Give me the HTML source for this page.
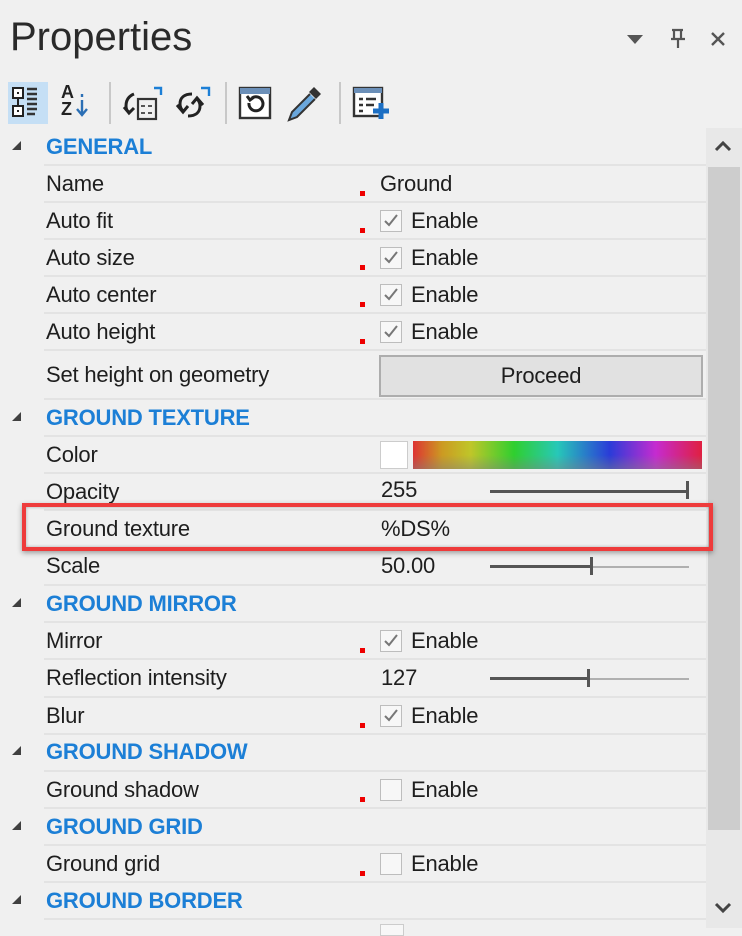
<!DOCTYPE html>
<html><head><meta charset="utf-8"><style>
body{margin:0;width:742px;height:928px;background:#f0f0f0;overflow:hidden;position:relative;font-family:"Liberation Sans",sans-serif;color:#1e1e1e}
.a{position:absolute}
.t{font-size:22px;letter-spacing:-0.2px;white-space:nowrap;line-height:24px}
.h{font-size:22px;font-weight:bold;color:#1c7fd6;letter-spacing:-0.2px;line-height:24px;white-space:nowrap}
.sep{position:absolute;left:44px;width:662px;height:2px;background:#e3e3e3}
.tri{position:absolute;left:12px;width:0;height:0;border-left:9px solid transparent;border-bottom:9px solid #404040}
.dot{position:absolute;left:360px;width:5px;height:5px;background:#e00}
.cb{position:absolute;left:380px;width:20px;height:20px;border:1px solid #bdbdbd;background:#f7f7f7}
.cb svg{position:absolute;left:2px;top:2px}
.trk{position:absolute;left:490px;width:199px;height:2px;background:#b0b0b0}
.fill{position:absolute;left:490px;height:3px;background:#555}
.thumb{position:absolute;width:3px;height:18px;background:#555}
</style></head><body>
<div class="a" style="left:10px;top:15px;font-size:40px;letter-spacing:0px;color:#2a2a2a">Properties</div>
<div class="a" style="left:627px;top:35px;width:0;height:0;border-left:8px solid transparent;border-right:8px solid transparent;border-top:9px solid #555"></div>
<svg class="a" style="left:668px;top:28px" width="20" height="22"><path d="M4 2h11M6 2v9M13 2v9M3 11h14M10 11v9" stroke="#555" stroke-width="2.2" fill="none"/></svg>
<svg class="a" style="left:709px;top:30px" width="18" height="18"><path d="M3 3L15 15M15 3L3 15" stroke="#555" stroke-width="2.4"/></svg>

<div class="a" style="left:8px;top:82px;width:40px;height:42px;background:#c5dff5"></div>
<svg class="a" style="left:12px;top:86px" width="36" height="36"><rect x="1" y="2" width="10" height="10" fill="#fff" stroke="#222" stroke-width="2"/><rect x="1" y="20" width="10" height="10" fill="#fff" stroke="#222" stroke-width="2"/><rect x="5" y="6" width="2" height="2" fill="#222"/><rect x="5" y="24" width="2" height="2" fill="#222"/><path d="M6 12v8" stroke="#222" stroke-width="2"/><path d="M15 3h10M15 8h10M15 13h10M15 18h10M15 23h10M15 28h8" stroke="#333" stroke-width="2.4"/></svg>
<div class="a" style="left:61px;top:84px;font-weight:bold;font-size:18px;line-height:17px;color:#222">A<br>Z</div>
<svg class="a" style="left:76px;top:92px" width="12" height="26"><path d="M6 2v3M6 8v14M1 17l5 6 5-6" stroke="#2b6fb5" stroke-width="2.4" fill="none"/></svg>
<div class="a" style="left:109px;top:82px;width:2px;height:42px;background:#c8c8c8"></div>
<svg class="a" style="left:122px;top:84px" width="42" height="42"><path d="M32 4h7v7" stroke="#1c7fd6" stroke-width="2.4" fill="none"/><rect x="16" y="15" width="18" height="20" fill="#f0f0f0" stroke="#333" stroke-width="2.2"/><path d="M19 22h4M26 22h4M19 29h4M26 29h4" stroke="#555" stroke-width="2"/><path d="M12 10c-5 2-8 6-8 12 0 3 1 5 3 6M2 23l5 6 5-5" stroke="#222" stroke-width="3" fill="none"/></svg>
<svg class="a" style="left:172px;top:84px" width="42" height="42"><path d="M29 4h8v8" stroke="#1c7fd6" stroke-width="2.4" fill="none"/><path d="M20 10c-8 0-12 4-12 10 0 3 1 5 3 7M5 21l6 7 5-6M16 32c8 0 12-4 12-10 0-3-1-5-3-7M31 21l-6-7-5 6" stroke="#222" stroke-width="3" fill="none"/></svg>
<div class="a" style="left:225px;top:82px;width:2px;height:42px;background:#c8c8c8"></div>
<svg class="a" style="left:238px;top:86px" width="34" height="36"><rect x="2" y="2" width="30" height="30" fill="#fff" stroke="#333" stroke-width="2.4"/><rect x="2" y="2" width="30" height="6" fill="#6b8fb8"/><path d="M11 17a7 7 0 1 0 3-5M9 10l3 4 4-3" stroke="#222" stroke-width="3" fill="none"/></svg>
<svg class="a" style="left:284px;top:84px" width="40" height="40"><path d="M30 3l7 7-5 5-7-7z" fill="#333"/><path d="M26 10l-18 18-3 8 8-3 18-18" fill="#6aa7dc" stroke="#333" stroke-width="2"/></svg>
<div class="a" style="left:339px;top:82px;width:2px;height:42px;background:#c8c8c8"></div>
<svg class="a" style="left:352px;top:86px" width="38" height="36"><rect x="2" y="2" width="28" height="28" fill="#fff" stroke="#333" stroke-width="2.4"/><rect x="2" y="2" width="28" height="5" fill="#6b8fb8"/><path d="M7 13h4M14 13h10M7 19h4M14 19h8M7 25h4" stroke="#333" stroke-width="2.4"/><path d="M29 17v16M21 25h16" stroke="#1c6fc4" stroke-width="5"/></svg>

<div class="a" style="left:706px;top:128px;width:36px;height:800px;background:#e8e8e8"></div>
<div class="a" style="left:708px;top:167px;width:32px;height:663px;background:#cdcdcd"></div>
<svg class="a" style="left:712px;top:138px" width="22" height="16"><path d="M4 12l7-7 7 7" stroke="#444" stroke-width="3" fill="none"/></svg>
<svg class="a" style="left:712px;top:900px" width="22" height="16"><path d="M4 4l7 7 7-7" stroke="#444" stroke-width="3" fill="none"/></svg>

<div class="sep" style="top:164px"></div><div class="sep" style="top:201px"></div><div class="sep" style="top:238px"></div><div class="sep" style="top:275px"></div><div class="sep" style="top:312px"></div><div class="sep" style="top:349px"></div><div class="sep" style="top:398px"></div><div class="sep" style="top:435px"></div><div class="sep" style="top:472px"></div><div class="sep" style="top:509px"></div><div class="sep" style="top:547px"></div><div class="sep" style="top:584px"></div><div class="sep" style="top:621px"></div><div class="sep" style="top:658px"></div><div class="sep" style="top:696px"></div><div class="sep" style="top:733px"></div><div class="sep" style="top:770px"></div><div class="sep" style="top:807px"></div><div class="sep" style="top:844px"></div><div class="sep" style="top:881px"></div><div class="sep" style="top:918px"></div>

<div class="tri" style="top:141px"></div><div class="a h" style="left:46px;top:135px">GENERAL</div>
<div class="tri" style="top:412px"></div><div class="a h" style="left:46px;top:406px">GROUND TEXTURE</div>
<div class="tri" style="top:598px"></div><div class="a h" style="left:46px;top:592px">GROUND MIRROR</div>
<div class="tri" style="top:746px"></div><div class="a h" style="left:46px;top:740px">GROUND SHADOW</div>
<div class="tri" style="top:821px"></div><div class="a h" style="left:46px;top:815px">GROUND GRID</div>
<div class="tri" style="top:895px"></div><div class="a h" style="left:46px;top:889px">GROUND BORDER</div>

<div class="a t" style="left:46px;top:172px">Name</div>
<div class="a t" style="left:46px;top:209px">Auto fit</div>
<div class="a t" style="left:46px;top:246px">Auto size</div>
<div class="a t" style="left:46px;top:283px">Auto center</div>
<div class="a t" style="left:46px;top:320px">Auto height</div>
<div class="a t" style="left:46px;top:363px">Set height on geometry</div>
<div class="a t" style="left:46px;top:443px">Color</div>
<div class="a t" style="left:46px;top:480px">Opacity</div>
<div class="a t" style="left:46px;top:517px">Ground texture</div>
<div class="a t" style="left:46px;top:554px">Scale</div>
<div class="a t" style="left:46px;top:629px">Mirror</div>
<div class="a t" style="left:46px;top:666px">Reflection intensity</div>
<div class="a t" style="left:46px;top:704px">Blur</div>
<div class="a t" style="left:46px;top:778px">Ground shadow</div>
<div class="a t" style="left:46px;top:852px">Ground grid</div>

<div class="dot" style="top:191px"></div><div class="a t" style="left:380px;top:172px">Ground</div>
<div class="dot" style="top:228px"></div><div class="cb" style="top:210px"><svg width="16" height="16"><path d="M2 8l4 4 8-10" stroke="#777" stroke-width="2" fill="none"/></svg></div><div class="a t" style="left:411px;top:209px">Enable</div>
<div class="dot" style="top:265px"></div><div class="cb" style="top:247px"><svg width="16" height="16"><path d="M2 8l4 4 8-10" stroke="#777" stroke-width="2" fill="none"/></svg></div><div class="a t" style="left:411px;top:246px">Enable</div>
<div class="dot" style="top:302px"></div><div class="cb" style="top:284px"><svg width="16" height="16"><path d="M2 8l4 4 8-10" stroke="#777" stroke-width="2" fill="none"/></svg></div><div class="a t" style="left:411px;top:283px">Enable</div>
<div class="dot" style="top:339px"></div><div class="cb" style="top:321px"><svg width="16" height="16"><path d="M2 8l4 4 8-10" stroke="#777" stroke-width="2" fill="none"/></svg></div><div class="a t" style="left:411px;top:320px">Enable</div>
<div class="a" style="left:379px;top:355px;width:320px;height:38px;background:#e1e1e1;border:2px solid #adadad;text-align:center;font-size:22px;line-height:38px;letter-spacing:-0.2px">Proceed</div>
<div class="a" style="left:380px;top:441px;width:26px;height:26px;background:#fff;border:1px solid #ccc"></div>
<div class="a" style="left:413px;top:441px;width:289px;height:28px;background:linear-gradient(90deg,#d33 0%,#cc9a22 10%,#bfc629 20%,#2fcf2f 35%,#27c8b8 50%,#2a3cd8 68%,#c52bd0 84%,#e02040 100%)"></div>
<div class="a" style="left:413px;top:455px;width:289px;height:14px;background:linear-gradient(rgba(128,128,128,0),rgba(128,128,128,.45))"></div>
<div class="a t" style="left:381px;top:478px">255</div>
<div class="trk" style="top:491px"></div><div class="fill" style="top:490px;width:199px"></div><div class="thumb" style="left:686px;top:481px"></div>
<div class="a t" style="left:381px;top:517px">%DS%</div>
<div class="a t" style="left:381px;top:554px">50.00</div>
<div class="trk" style="top:566px"></div><div class="fill" style="top:565px;width:101px"></div><div class="thumb" style="left:590px;top:557px"></div>
<div class="dot" style="top:648px"></div><div class="cb" style="top:630px"><svg width="16" height="16"><path d="M2 8l4 4 8-10" stroke="#777" stroke-width="2" fill="none"/></svg></div><div class="a t" style="left:411px;top:629px">Enable</div>
<div class="a t" style="left:381px;top:666px">127</div>
<div class="trk" style="top:678px"></div><div class="fill" style="top:677px;width:99px"></div><div class="thumb" style="left:587px;top:669px"></div>
<div class="dot" style="top:723px"></div><div class="cb" style="top:705px"><svg width="16" height="16"><path d="M2 8l4 4 8-10" stroke="#777" stroke-width="2" fill="none"/></svg></div><div class="a t" style="left:411px;top:704px">Enable</div>
<div class="dot" style="top:797px"></div><div class="cb" style="top:779px"></div><div class="a t" style="left:411px;top:778px">Enable</div>
<div class="dot" style="top:871px"></div><div class="cb" style="top:853px"></div><div class="a t" style="left:411px;top:852px">Enable</div>
<div class="a" style="left:380px;top:924px;width:22px;height:10px;border:1px solid #ccc;background:#f7f7f7"></div>

<div class="a" style="left:22px;top:503px;width:683px;height:40px;border:4px solid #ee3b3b;box-shadow:0 2px 5px rgba(0,0,0,.35),inset 0 0 3px rgba(0,0,0,.3)"></div>
</body></html>
